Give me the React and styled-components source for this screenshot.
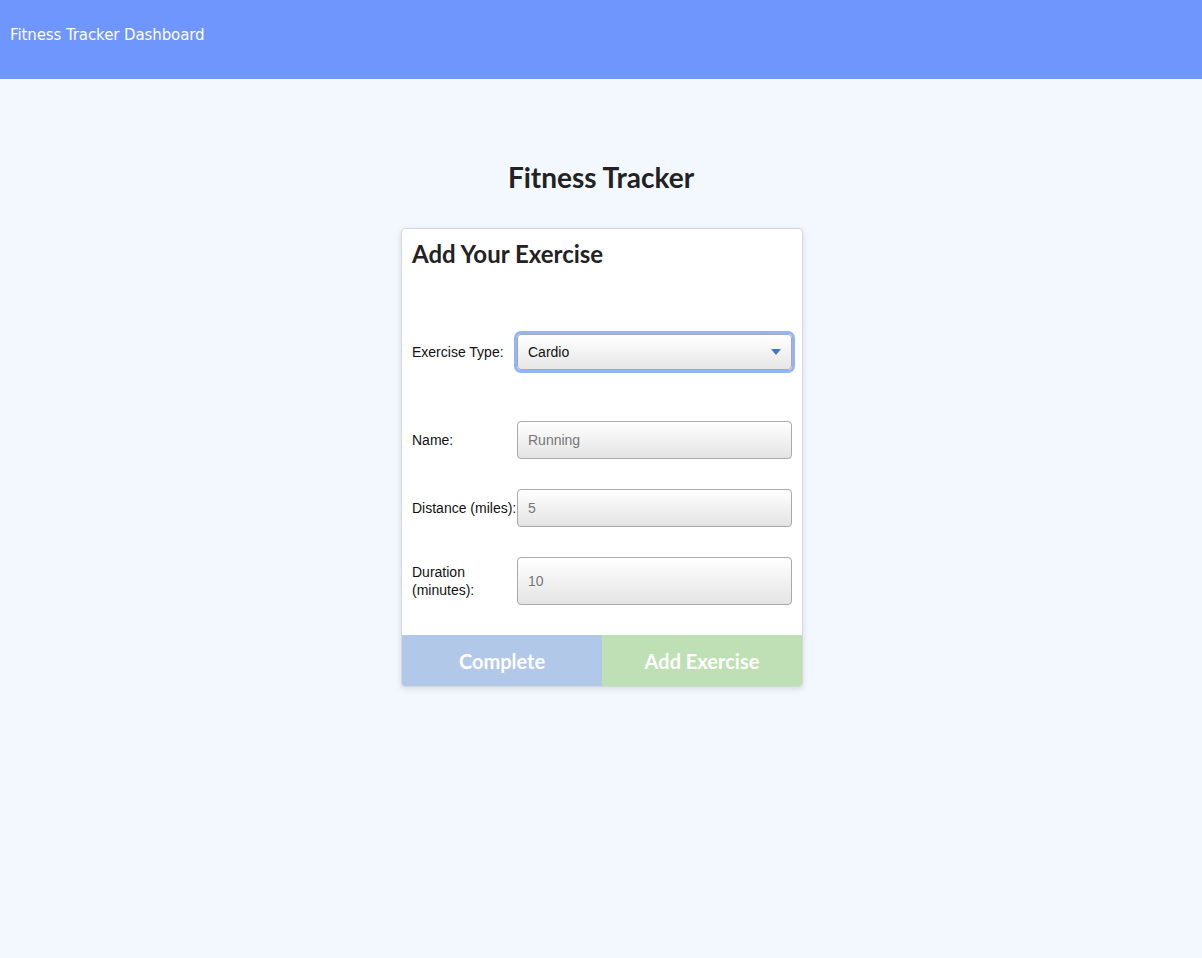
import React from 'react';
import styled, { createGlobalStyle } from 'styled-components';

const GlobalStyle = createGlobalStyle`
  html, body {
    margin: 0;
    padding: 0;
    background: #f3f8ff;
  }

  body {
    font-family: "Liberation Sans", Arial, sans-serif;
    min-height: 958px;
  }
`;

const Header = styled.header`
  box-sizing: border-box;
  height: 79px;
  background: #6f96fd;
  color: #ffffff;
  padding: 25px 10px;
  font-family: "DejaVu Sans", Verdana, sans-serif;
  font-size: 15px;
  letter-spacing: -0.1px;
  line-height: 20px;
`;

const Main = styled.main`
  display: flex;
  flex-direction: column;
  align-items: center;
  padding-top: 81px;
`;

const PageTitle = styled.h1`
  margin: 0 0 34px 0;
  font-family: Lato, "Liberation Sans", sans-serif;
  font-weight: 700;
  font-size: 28px;
  line-height: 34px;
  color: #222222;
`;

const Card = styled.section`
  width: 400px;
  margin-left: 2px;
  background: #ffffff;
  border: 1px solid #d4d8de;
  border-radius: 4px;
  box-shadow: 0 2px 6px rgba(0, 0, 0, 0.12);
  overflow: hidden;
`;

const CardBody = styled.div`
  padding: 10px 10px 30px 10px;
`;

const CardTitle = styled.h2`
  margin: 0 0 65px 0;
  font-family: Lato, "Liberation Sans", sans-serif;
  font-weight: 700;
  font-size: 24px;
  line-height: 30px;
  color: #222222;
`;

const Row = styled.div`
  display: flex;
  align-items: center;
  margin-bottom: ${(p) => p.$gap}px;
`;

const Label = styled.label`
  width: ${(p) => (p.$narrow ? 80 : 105)}px;
  margin-right: ${(p) => (p.$narrow ? 25 : 0)}px;
  flex-shrink: 0;
  font-size: 14px;
  line-height: 18px;
  color: #111111;
`;

const Select = styled.div`
  flex: 1;
  box-sizing: border-box;
  height: 36px;
  display: flex;
  align-items: center;
  justify-content: space-between;
  padding: 0 10px;
  border: 1px solid #a3aab5;
  border-radius: 4px;
  background: linear-gradient(#ffffff, #e6e6e6);
  box-shadow: 0 0 0 3px #93b4f6;
  font-size: 14px;
  color: #111111;
`;

const Caret = styled.span`
  width: 0;
  height: 0;
  border-left: 5px solid transparent;
  border-right: 5px solid transparent;
  border-top: 6px solid #3f78c6;
`;

const Input = styled.input`
  flex: 1;
  box-sizing: border-box;
  height: ${(p) => p.$height}px;
  padding: 0 10px;
  border: 1px solid #a9a9a9;
  border-radius: 4px;
  background: linear-gradient(#ffffff, #e4e4e4);
  font-family: "Liberation Sans", Arial, sans-serif;
  font-size: 14px;
  outline: none;

  &::placeholder {
    color: #777777;
  }
`;

const ButtonRow = styled.div`
  display: flex;
`;

const ActionButton = styled.button`
  flex: 1;
  height: 51px;
  border: none;
  background: ${(p) => p.$bg};
  color: #ffffff;
  font-family: Lato, "Liberation Sans", sans-serif;
  font-weight: 700;
  font-size: 20px;
  cursor: pointer;
`;

const fields = [
  { label: 'Name:', placeholder: 'Running', height: 38 },
  { label: 'Distance (miles):', placeholder: '5', height: 38 },
  { label: 'Duration (minutes):', placeholder: '10', height: 48, narrow: true },
];

export default function App() {
  return (
    <>
      <GlobalStyle />
      <Header>Fitness Tracker Dashboard</Header>
      <Main>
        <PageTitle>Fitness Tracker</PageTitle>
        <Card>
          <CardBody>
            <CardTitle>Add Your Exercise</CardTitle>
            <Row $gap={51}>
              <Label>Exercise Type:</Label>
              <Select>
                Cardio
                <Caret />
              </Select>
            </Row>
            {fields.map((f, i) => (
              <Row key={f.label} $gap={i === fields.length - 1 ? 0 : 30}>
                <Label $narrow={f.narrow}>{f.label}</Label>
                <Input placeholder={f.placeholder} $height={f.height} />
              </Row>
            ))}
          </CardBody>
          <ButtonRow>
            <ActionButton $bg="#b1c8e8">Complete</ActionButton>
            <ActionButton $bg="#bfdfb4">Add Exercise</ActionButton>
          </ButtonRow>
        </Card>
      </Main>
    </>
  );
}
